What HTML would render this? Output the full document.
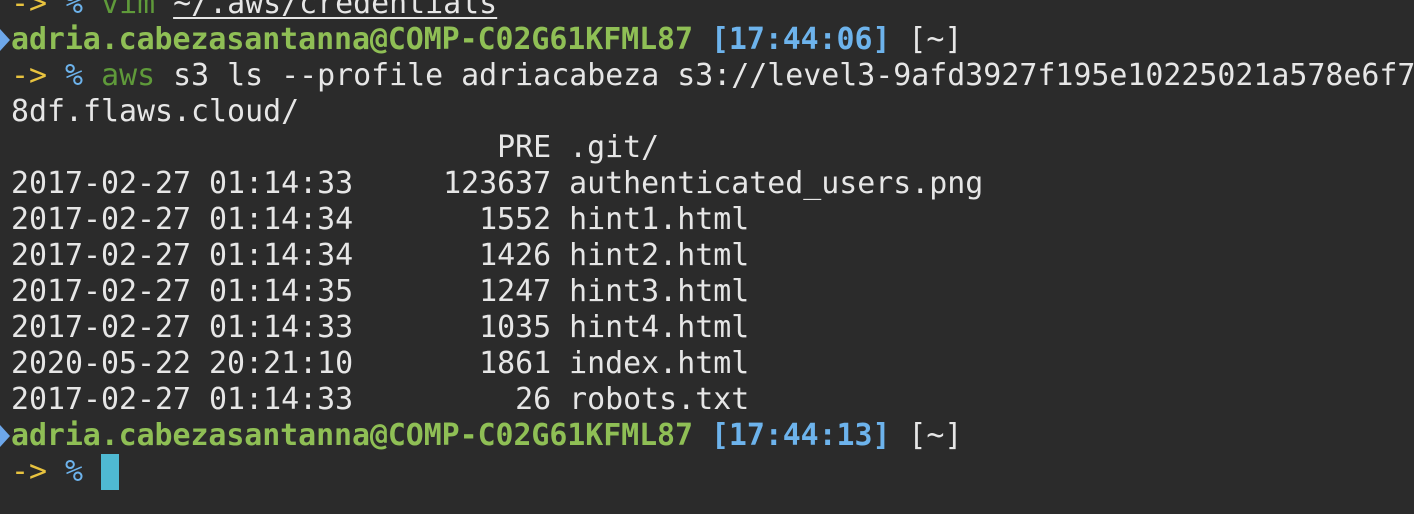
<!DOCTYPE html>
<html><head><meta charset="utf-8"><style>
html,body{margin:0;padding:0;background:#2b2b2b;width:1414px;height:514px;overflow:hidden}
.t{position:absolute;left:11px;top:-14px;font-family:"DejaVu Sans Mono","Liberation Mono",monospace;font-size:29.92px;line-height:36px;color:#e6e6e6;white-space:pre}
.y{color:#e8c33f}.b{color:#6db3ec}.g{color:#5f9a3a}.G{color:#8fbf55;font-weight:bold;letter-spacing:-0.06px}.B{color:#6db3ec;font-weight:bold;letter-spacing:-0.06px}
.u{text-decoration:underline;text-underline-offset:4px}
.cur{display:inline-block;width:18px;height:36px;background:#4fb9d2;vertical-align:top}
.tri{position:absolute;left:0;width:0;height:0;border-top:11px solid transparent;border-bottom:11px solid transparent;border-left:10px solid #6da7ea}
</style></head><body>
<div class="tri" style="top:29px"></div>
<div class="tri" style="top:425px"></div>
<div class="t"><span class="y">-&gt;</span> <span class="b">%</span> <span class="g">vim</span> <span class="u">~/.aws/credentials</span>
<span class="G">adria.cabezasantanna@COMP-C02G61KFML87</span> <span class="B">[17:44:06]</span> [~]
<span class="y">-&gt;</span> <span class="b">%</span> <span class="g">aws</span> s3 ls --profile adriacabeza s3://level3-9afd3927f195e10225021a578e6f7
8df.flaws.cloud/
                           PRE .git/
2017-02-27 01:14:33     123637 authenticated_users.png
2017-02-27 01:14:34       1552 hint1.html
2017-02-27 01:14:34       1426 hint2.html
2017-02-27 01:14:35       1247 hint3.html
2017-02-27 01:14:33       1035 hint4.html
2020-05-22 20:21:10       1861 index.html
2017-02-27 01:14:33         26 robots.txt
<span class="G">adria.cabezasantanna@COMP-C02G61KFML87</span> <span class="B">[17:44:13]</span> [~]
<span class="y">-&gt;</span> <span class="b">%</span> <span class="cur"></span></div>
</body></html>
